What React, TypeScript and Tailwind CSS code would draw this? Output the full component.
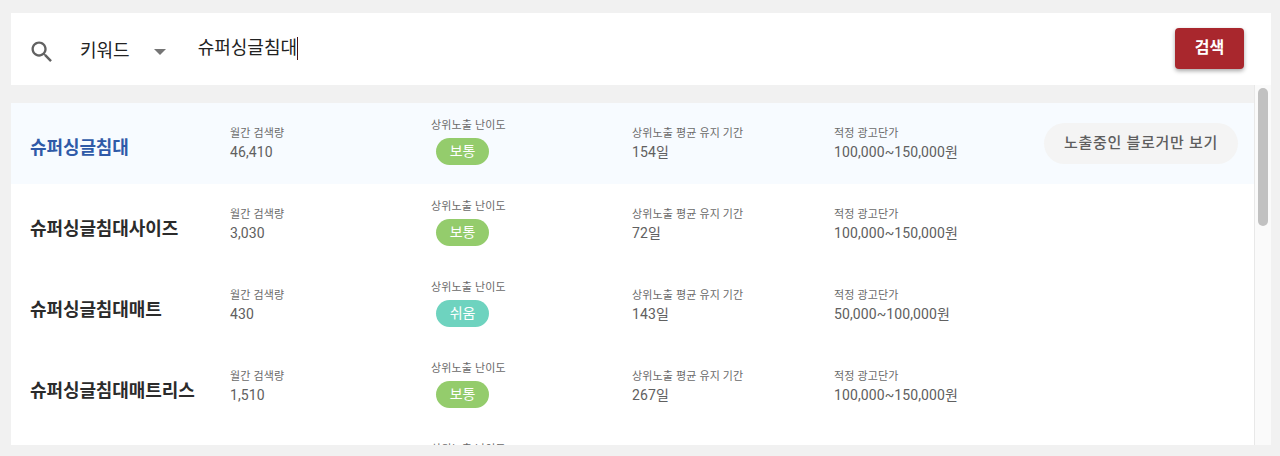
interface Keyword {
  name: string
  volume: string
  level: string
  days: string
  price: string
  active?: boolean
}

const keywords: Keyword[] = [
  { name: '슈퍼싱글침대', volume: '46,410', level: '보통', days: '154일', price: '100,000~150,000원', active: true },
  { name: '슈퍼싱글침대사이즈', volume: '3,030', level: '보통', days: '72일', price: '100,000~150,000원' },
  { name: '슈퍼싱글침대매트', volume: '430', level: '쉬움', days: '143일', price: '50,000~100,000원' },
  { name: '슈퍼싱글침대매트리스', volume: '1,510', level: '보통', days: '267일', price: '100,000~150,000원' },
  { name: '슈퍼싱글침대프레임', volume: '880', level: '보통', days: '98일', price: '100,000~150,000원' },
]

function Stat({ label, value, width }: { label: string; value: string; width: string }) {
  return (
    <div className={`${width} shrink-0 pb-[1px]`}>
      <div className="text-[11px] leading-[16px] tracking-[0.15px] text-[#6a6a6a]">{label}</div>
      <div className="mt-[1px] text-[14px] leading-[18px] tracking-[0.1px] text-[#606060]">{value}</div>
    </div>
  )
}

function Row({ item }: { item: Keyword }) {
  return (
    <div className={`flex h-[81px] shrink-0 items-center pl-[19px] ${item.active ? 'bg-[#f7fbff]' : 'bg-white'}`}>
      <div
        className={`mt-[8px] w-[200px] shrink-0 text-[18px] font-bold tracking-[-0.1px] ${
          item.active ? 'text-[#2f5aa8]' : 'text-[#2b2b2b]'
        }`}
      >
        {item.name}
      </div>
      <Stat label="월간 검색량" value={item.volume} width="w-[201px]" />
      <div className="mt-[-4px] w-[201px] shrink-0">
        <div className="text-[11px] leading-[16px] tracking-[0.15px] text-[#6a6a6a]">상위노출 난이도</div>
        <div
          className={`ml-[5px] mt-[4px] flex h-[27px] w-[53px] items-center justify-center rounded-full text-[14px] tracking-[-0.2px] text-white ${
            item.level === '쉬움' ? 'bg-[#6ed3bf]' : 'bg-[#94cc6c]'
          }`}
        >
          {item.level}
        </div>
      </div>
      <Stat label="상위노출 평균 유지 기간" value={item.days} width="w-[202px]" />
      <Stat label="적정 광고단가" value={item.price} width="w-[210px]" />
      {item.active && (
        <button className="flex h-[41px] w-[194px] shrink-0 items-center justify-center rounded-full bg-[#f4f4f4] text-[15px] font-medium tracking-[0.7px] text-[#5e5e5e]">
          노출중인 블로거만 보기
        </button>
      )}
    </div>
  )
}

export default function App() {
  return (
    <div
      className="h-[456px] overflow-hidden bg-[#f1f1f1] pb-[11px] pl-[11px] pr-[9px] pt-[13px]"
      style={{ fontFamily: 'Roboto, "Noto Sans CJK KR", sans-serif' }}
    >
      <div className="flex h-[72px] items-center bg-white pl-[17px] pr-[27px]">
        <svg viewBox="0 0 24 24" className="mt-[6px] h-[28px] w-[28px] shrink-0 fill-[#616161]">
          <path d="M15.5 14h-.79l-.28-.27C15.41 12.59 16 11.11 16 9.5 16 5.91 13.09 3 9.5 3S3 5.91 3 9.5 5.91 16 9.5 16c1.61 0 3.09-.59 4.23-1.57l.27.28v.79l5 4.99L20.49 19l-4.99-5zm-6 0C7.01 14 5 11.99 5 9.5S7.01 5 9.5 5 14 7.01 14 9.5 11.99 14 9.5 14z" />
        </svg>
        <span className="ml-[24px] mt-[4px] text-[18px] leading-[24px] text-[#222]">키워드</span>
        <span className="ml-[24px] mt-[6px] h-0 w-0 border-x-[6px] border-t-[6px] border-x-transparent border-t-[#757575]" />
        <div className="ml-[32px] flex flex-1 items-center text-[18px] leading-[24px] text-[#222]">
          <span className="mt-[-2px]">슈퍼싱글침대</span>
          <span className="mt-[-1px] h-[23px] w-px bg-[#4a1010]" />
        </div>
        <button className="mt-[-2px] h-[41px] w-[69px] rounded bg-[#a9272d] text-[16px] font-bold text-white shadow-[0_2px_4px_rgba(0,0,0,0.35)]">
          검색
        </button>
      </div>

      <div className="flex h-[360px] overflow-hidden">
        <div className="flex min-w-0 flex-1 flex-col border-r border-[#e8e8e8] pt-[18px]">
          {keywords.map((item) => (
            <Row key={item.name} item={item} />
          ))}
        </div>
        <div className="w-[16px] shrink-0 bg-[#fafafa] px-[3px] pt-[3px]">
          <div className="h-[138px] rounded-full bg-[#c1c1c1]" />
        </div>
      </div>
    </div>
  )
}
